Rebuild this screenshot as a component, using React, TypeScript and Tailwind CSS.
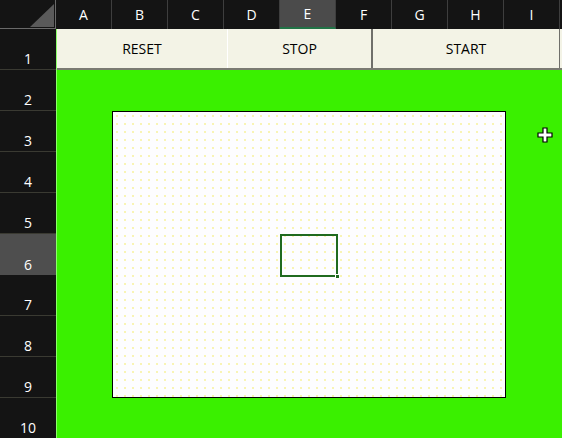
import React from "react";

const COLS = ["A", "B", "C", "D", "E", "F", "G", "H", "I"];
const ROWS = [1, 2, 3, 4, 5, 6, 7, 8, 9, 10];

const font = { fontFamily: '"Open Sans", "Noto Sans", sans-serif' };

function Corner() {
  return (
    <div className="relative h-[29px] w-[56px] shrink-0 border-b border-r border-[#6a6a6a] bg-[#141414]">
      <svg className="absolute left-[30px] top-[4px]" width="24" height="23" viewBox="0 0 24 23">
        <polygon points="0,23 24,23 24,0" fill="#5a5a5a" />
      </svg>
    </div>
  );
}

function ColHeader({ label }: { label: string }) {
  const active = label === "E";
  return (
    <div
      className={
        "flex h-[29px] w-[56px] shrink-0 items-center justify-center border-r border-[#3e3e3e] text-[14px] text-white " +
        (active ? "border-b-2 border-b-[#217346] bg-[#4b4b4b]" : "bg-[#141414]")
      }
    >
      {label}
    </div>
  );
}

function RowHeader({ n }: { n: number }) {
  const active = n === 6;
  return (
    <div
      className={
        "flex h-[41px] w-[56px] items-end justify-center text-[14px] text-white " +
        (active ? "bg-[#4e4e4e]" : "border-b border-[#3a3a32] bg-[#141414]")
      }
    >
      {n}
    </div>
  );
}

function SheetButton({ label, width, edge }: { label: string; width: number; edge: string }) {
  return (
    <button
      className={"flex h-full items-center justify-center border-r bg-[#f3f3e6] text-[14px] text-black " + edge}
      style={{ width }}
    >
      {label}
    </button>
  );
}

export default function App() {
  return (
    <div className="relative h-[438px] w-[562px] overflow-hidden bg-[#141414]" style={font}>
      <div className="flex">
        <Corner />
        {COLS.map((c) => (
          <ColHeader key={c} label={c} />
        ))}
      </div>

      <div className="flex">
        <div className="flex w-[56px] shrink-0 flex-col">
          {ROWS.map((n) => (
            <RowHeader key={n} n={n} />
          ))}
        </div>

        <div className="flex w-[506px] flex-col border-l border-[#8cff6a]">
          {/* control buttons in row 1 */}
          <div className="flex h-[41px] border-b-2 border-[#7a7a72] bg-[#f3f3e6]">
            <SheetButton label="RESET" width={171} edge="border-white" />
            <SheetButton label="STOP" width={145} edge="border-[#6f6f6a] border-r-2" />
            <SheetButton label="START" width={187} edge="border-[#6f6f6a]" />
          </div>

          <div className="h-[400px] bg-[#3af000] pl-[55px] pt-[41px]">
            <div className="relative h-[287px] w-[394px] border border-black bg-[#fdfdff] bg-[radial-gradient(circle,#f6f08c_0.6px,transparent_0.9px)] bg-[length:8px_8px]">
              {/* selected cell E6 */}
              <div className="absolute left-[167px] top-[122px] h-[43px] w-[58px] border-2 border-[#1f6a1f]">
                <div className="absolute -bottom-[4px] -right-[4px] h-[5px] w-[5px] border border-white bg-[#1f6a1f]" />
              </div>
            </div>
          </div>
        </div>
      </div>

      {/* mouse cursor */}
      <svg className="absolute left-[537px] top-[127px]" width="16" height="16" viewBox="0 0 16 16">
        <path
          d="M6 1h4v5h5v4h-5v5H6v-5H1V6h5z"
          fill="white"
          stroke="black"
          strokeWidth="1.2"
        />
      </svg>
    </div>
  );
}
